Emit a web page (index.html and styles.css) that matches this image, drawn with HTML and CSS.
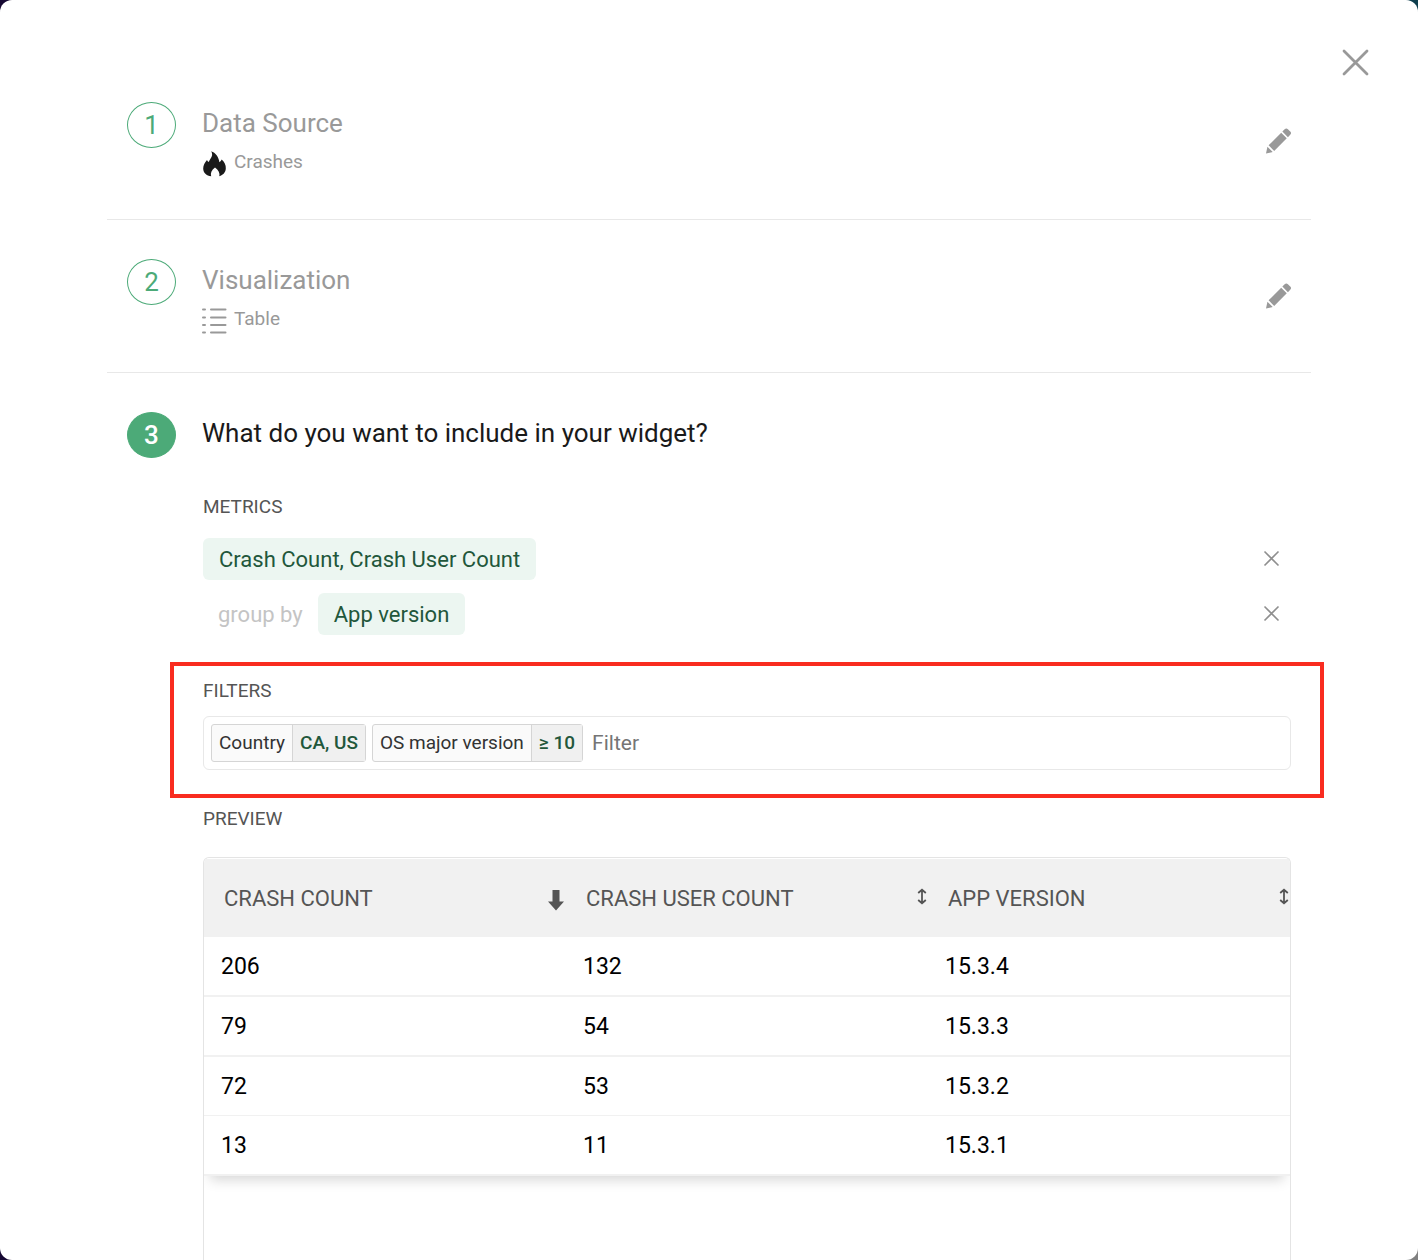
FILE: index.html
```html
<!DOCTYPE html>
<html lang="en">
<head>
  <meta charset="UTF-8">
  <meta name="viewport" content="width=device-width, initial-scale=1.0">
  <title>Widget</title>
  <link rel="stylesheet" href="styles.css">
</head>
<body>
  <main class="dialog">
    <header class="dialog-header">
      <button class="icon-button" type="button" aria-label="Close">
        <svg width="27" height="27" viewBox="0 0 27 27"><path d="M2 2l23 23M25 2L2 25" fill="none" stroke="#999" stroke-width="2.800" stroke-linecap="round"/></svg>
      </button>
    </header>

    <section class="step">
      <span class="badge">1</span>
      <div class="step-text">
        <h2>Data Source</h2>
        <div class="choice choice-large">
          <svg width="26" height="26" viewBox="0 0 26 26"><path fill="#1a1a1a" d="M9.200.2C13.500 1.700 16.700 5.600 17.400 11.200C18.500 10.500 19.200 9.700 19.700 8.600C22.600 11.200 24 14.300 23.800 17.600C23.600 21.500 21.100 24.200 17.300 25.300C18.200 22.200 16.500 19.300 13 16.600C9.500 19.300 8.200 22.200 9.200 25.300C4.400 24.600 1.200 21.600 1.200 17.400C1.200 14.300 2.800 11.600 5 8.900C5.300 9.900 5.900 10.600 6.800 11.100C7.200 8.700 9.800 6.600 10.100 4.200C10.300 2.800 9.900 1.500 9.200.2z"/></svg>
          <span>Crashes</span>
        </div>
      </div>
      <button class="icon-button" type="button" aria-label="Edit data source">
        <svg width="25" height="26" viewBox="0 0 26 26"><path fill="#999" d="M0 26l1.500-7 5.500 5.500zM2.700 17.500L15.800 4.400l5.800 5.800L8.500 23.300zM17 3.200L19.400.8a2.400 2.400 0 0 1 3.400 0l2.400 2.400a2.400 2.400 0 0 1 0 3.400L22.800 9z"/></svg>
      </button>
    </section>

    <section class="step">
      <span class="badge">2</span>
      <div class="step-text">
        <h2>Visualization</h2>
        <div class="choice">
          <svg width="26" height="26" viewBox="0 0 26 26"><path d="M1 1.500h2M9 1.500h14.500M1 9.500h2M9 9.500h14.500M1 17h2M9 17h14.500M1 24.500h2M9 24.500h14.500" fill="none" stroke="#999" stroke-width="2" stroke-linecap="round"/></svg>
          <span>Table</span>
        </div>
      </div>
      <button class="icon-button" type="button" aria-label="Edit visualization">
        <svg width="25" height="26" viewBox="0 0 26 26"><path fill="#999" d="M0 26l1.500-7 5.500 5.500zM2.700 17.500L15.800 4.400l5.800 5.800L8.500 23.300zM17 3.200L19.400.8a2.400 2.400 0 0 1 3.400 0l2.400 2.400a2.400 2.400 0 0 1 0 3.400L22.800 9z"/></svg>
      </button>
    </section>

    <section class="step step-active">
      <span class="badge">3</span>
      <div class="step-text">
        <h2>What do you want to include in your widget?</h2>
        <div class="panel">
          <h3>METRICS</h3>
          <div class="metrics">
            <div class="metric">
              <button class="chip" type="button">Crash Count, Crash User Count</button>
              <button class="icon-button remove" type="button" aria-label="Remove metrics">
                <svg width="17" height="17" viewBox="0 0 17 17"><path d="M1.500 1.500l14 14M15.500 1.500l-14 14" fill="none" stroke="#8f8f8f" stroke-width="1.600"/></svg>
              </button>
            </div>
            <div class="metric">
              <span class="group-by">group by</span>
              <button class="chip" type="button">App version</button>
              <button class="icon-button remove" type="button" aria-label="Remove grouping">
                <svg width="17" height="17" viewBox="0 0 17 17"><path d="M1.500 1.500l14 14M15.500 1.500l-14 14" fill="none" stroke="#8f8f8f" stroke-width="1.600"/></svg>
              </button>
            </div>
          </div>

          <div class="filters">
            <h3><label for="filter">FILTERS</label></h3>
            <div class="filter-box">
              <span class="tag"><span class="tag-key">Country</span><b>CA, US</b></span>
              <span class="tag"><span class="tag-key">OS major version</span><b>≥ 10</b></span>
              <input type="text" id="filter" placeholder="Filter">
            </div>
          </div>

          <h3>PREVIEW</h3>
          <div class="preview">
            <table>
              <thead>
                <tr>
                  <th>
                    <button class="sort" type="button">CRASH COUNT
                      <svg class="sorted" width="18" height="22" viewBox="0 0 18 22"><path fill="#555" d="M5.500 1h7v11.500H17L9 21.500l-8-9h4.500z"/></svg>
                    </button>
                  </th>
                  <th>
                    <button class="sort" type="button">CRASH USER COUNT
                      <svg width="10" height="20" viewBox="0 0 10 20"><path d="M5 2v13M1.200 5L5 1.700 8.800 5M1.200 12L5 15.300 8.800 12" fill="none" stroke="#555" stroke-width="1.800"/></svg>
                    </button>
                  </th>
                  <th>
                    <button class="sort" type="button">APP VERSION
                      <svg width="10" height="20" viewBox="0 0 10 20"><path d="M5 2v13M1.200 5L5 1.700 8.800 5M1.200 12L5 15.300 8.800 12" fill="none" stroke="#555" stroke-width="1.800"/></svg>
                    </button>
                  </th>
                </tr>
              </thead>
              <tbody>
                <tr><td>206</td><td>132</td><td>15.3.4</td></tr>
                <tr><td>79</td><td>54</td><td>15.3.3</td></tr>
                <tr><td>72</td><td>53</td><td>15.3.2</td></tr>
                <tr><td>13</td><td>11</td><td>15.3.1</td></tr>
              </tbody>
            </table>
          </div>
        </div>
      </div>
    </section>
  </main>
</body>
</html>
```
FILE: styles.css
```css
* {
  box-sizing: border-box;
}
body {
  margin: 0;
  font-family: Roboto, sans-serif;
  background: radial-gradient(circle at bottom right, #808080 60px, transparent 120px), linear-gradient(to right, #160832, #0f3f4e);
}
h2, h3 {
  margin: 0;
  font-weight: 400;
}
button {
  font-family: inherit;
  border: none;
  cursor: pointer;
}
svg {
  display: block;
  flex-shrink: 0;
}
.dialog {
  display: flex;
  flex-direction: column;
  min-height: 100vh;
  padding: 0 107px;
  background-color: white;
  border-radius: 12px;
}
.dialog-header {
  display: flex;
  justify-content: flex-end;
  margin-right: -58px;
  padding: 49px 0 26px;
}
.icon-button {
  padding: 0;
  background: none;
}
.step {
  display: flex;
  align-items: center;
  gap: 26px;
  margin-bottom: 39px;
  padding: 0 20px 39px;
  border-bottom: 1px solid #e8e8e8;
}
.badge {
  display: flex;
  align-items: center;
  justify-content: center;
  align-self: flex-start;
  width: 49px;
  height: 46px;
  border: 1px solid #4caa78;
  border-radius: 50%;
  font-size: 26px;
  color: #4caa78;
}
.step-text {
  flex: 1;
  color: #999;
}
.step-text h2 {
  padding-top: 5px;
  font-size: 26px;
  line-height: 32px;
}
.choice {
  display: flex;
  gap: 6px;
  height: 37px;
  padding-top: 12px;
  font-size: 19px;
  line-height: 22px;
}
.choice-large {
  height: 41px;
}
.step-active {
  flex: 1;
  align-items: stretch;
  margin-bottom: 0;
  padding-bottom: 0;
  border-bottom: none;
}
.step-active .badge {
  background-color: #4caa78;
  color: white;
  font-weight: 500;
}
.step-active .step-text {
  display: flex;
  flex-direction: column;
  color: #1a1a1a;
}
.panel {
  display: flex;
  flex: 1;
  flex-direction: column;
  padding: 46px 0 0 1px;
}
.panel h3 {
  font-size: 19px;
  line-height: 24px;
  color: #555;
}
.metrics {
  display: flex;
  flex-direction: column;
  gap: 13px;
  padding: 19px 0 27px;
}
.metric {
  display: flex;
  align-items: center;
  padding-right: 11px;
}
.chip {
  height: 42px;
  padding: 0 16px;
  background-color: #ecf6f1;
  border-radius: 6px;
  font-size: 22px;
  color: #22573b;
}
.group-by {
  padding: 0 15px;
  font-size: 22px;
  color: #c4c4c4;
}
.remove {
  margin-left: auto;
  padding-bottom: 2px;
}
.filters {
  margin: 0 -33px 9px;
  padding: 13px 29px 24px;
  border: 4px solid #f92c20;
}
.filter-box {
  display: flex;
  align-items: center;
  gap: 6px;
  height: 54px;
  margin-top: 13px;
  padding: 0 7px;
  border: 1px solid #e8e8e8;
  border-radius: 6px;
}
.filter-box input {
  flex: 1;
  min-width: 0;
  padding: 0 3px;
  border: none;
  outline: none;
  font-family: inherit;
  font-size: 21px;
}
.filter-box input::placeholder {
  color: #757575;
}
.tag {
  display: flex;
  height: 38px;
  border: 1px solid #d5d5d5;
  border-radius: 3px;
  background-color: #fafafa;
  font-size: 19px;
  line-height: 36px;
  color: #333;
}
.tag-key {
  padding: 0 7px;
}
.tag b {
  padding: 0 7px;
  border-left: 1px solid #d5d5d5;
  background-color: #f0f0f0;
  font-weight: 500;
  color: #22573b;
}
.preview {
  flex: 1;
  margin-top: 26px;
  padding-top: 1px;
  border: 1px solid #e4e4e4;
  border-bottom: none;
  border-radius: 6px 6px 0 0;
  overflow: hidden;
}
table {
  width: 100%;
  table-layout: fixed;
  border-collapse: separate;
  border-spacing: 0;
  box-shadow: 0 10px 12px -6px rgba(0, 0, 0, 0.16);
}
th {
  height: 78px;
  padding: 0;
  background-color: #f1f1f1;
}
.sort {
  display: flex;
  align-items: center;
  justify-content: space-between;
  width: 100%;
  height: 78px;
  padding: 0 1px 0 20px;
  background: none;
  font-size: 22px;
  color: #555;
}
.sorted {
  margin-top: 4px;
}
td {
  height: 60px;
  padding: 0 17px;
  background-color: white;
  border-bottom: 2px solid #f1f1f1;
  font-size: 23px;
  color: black;
}
tr:nth-child(3) td {
  height: 59px;
  border-bottom-width: 1px;
}
```
